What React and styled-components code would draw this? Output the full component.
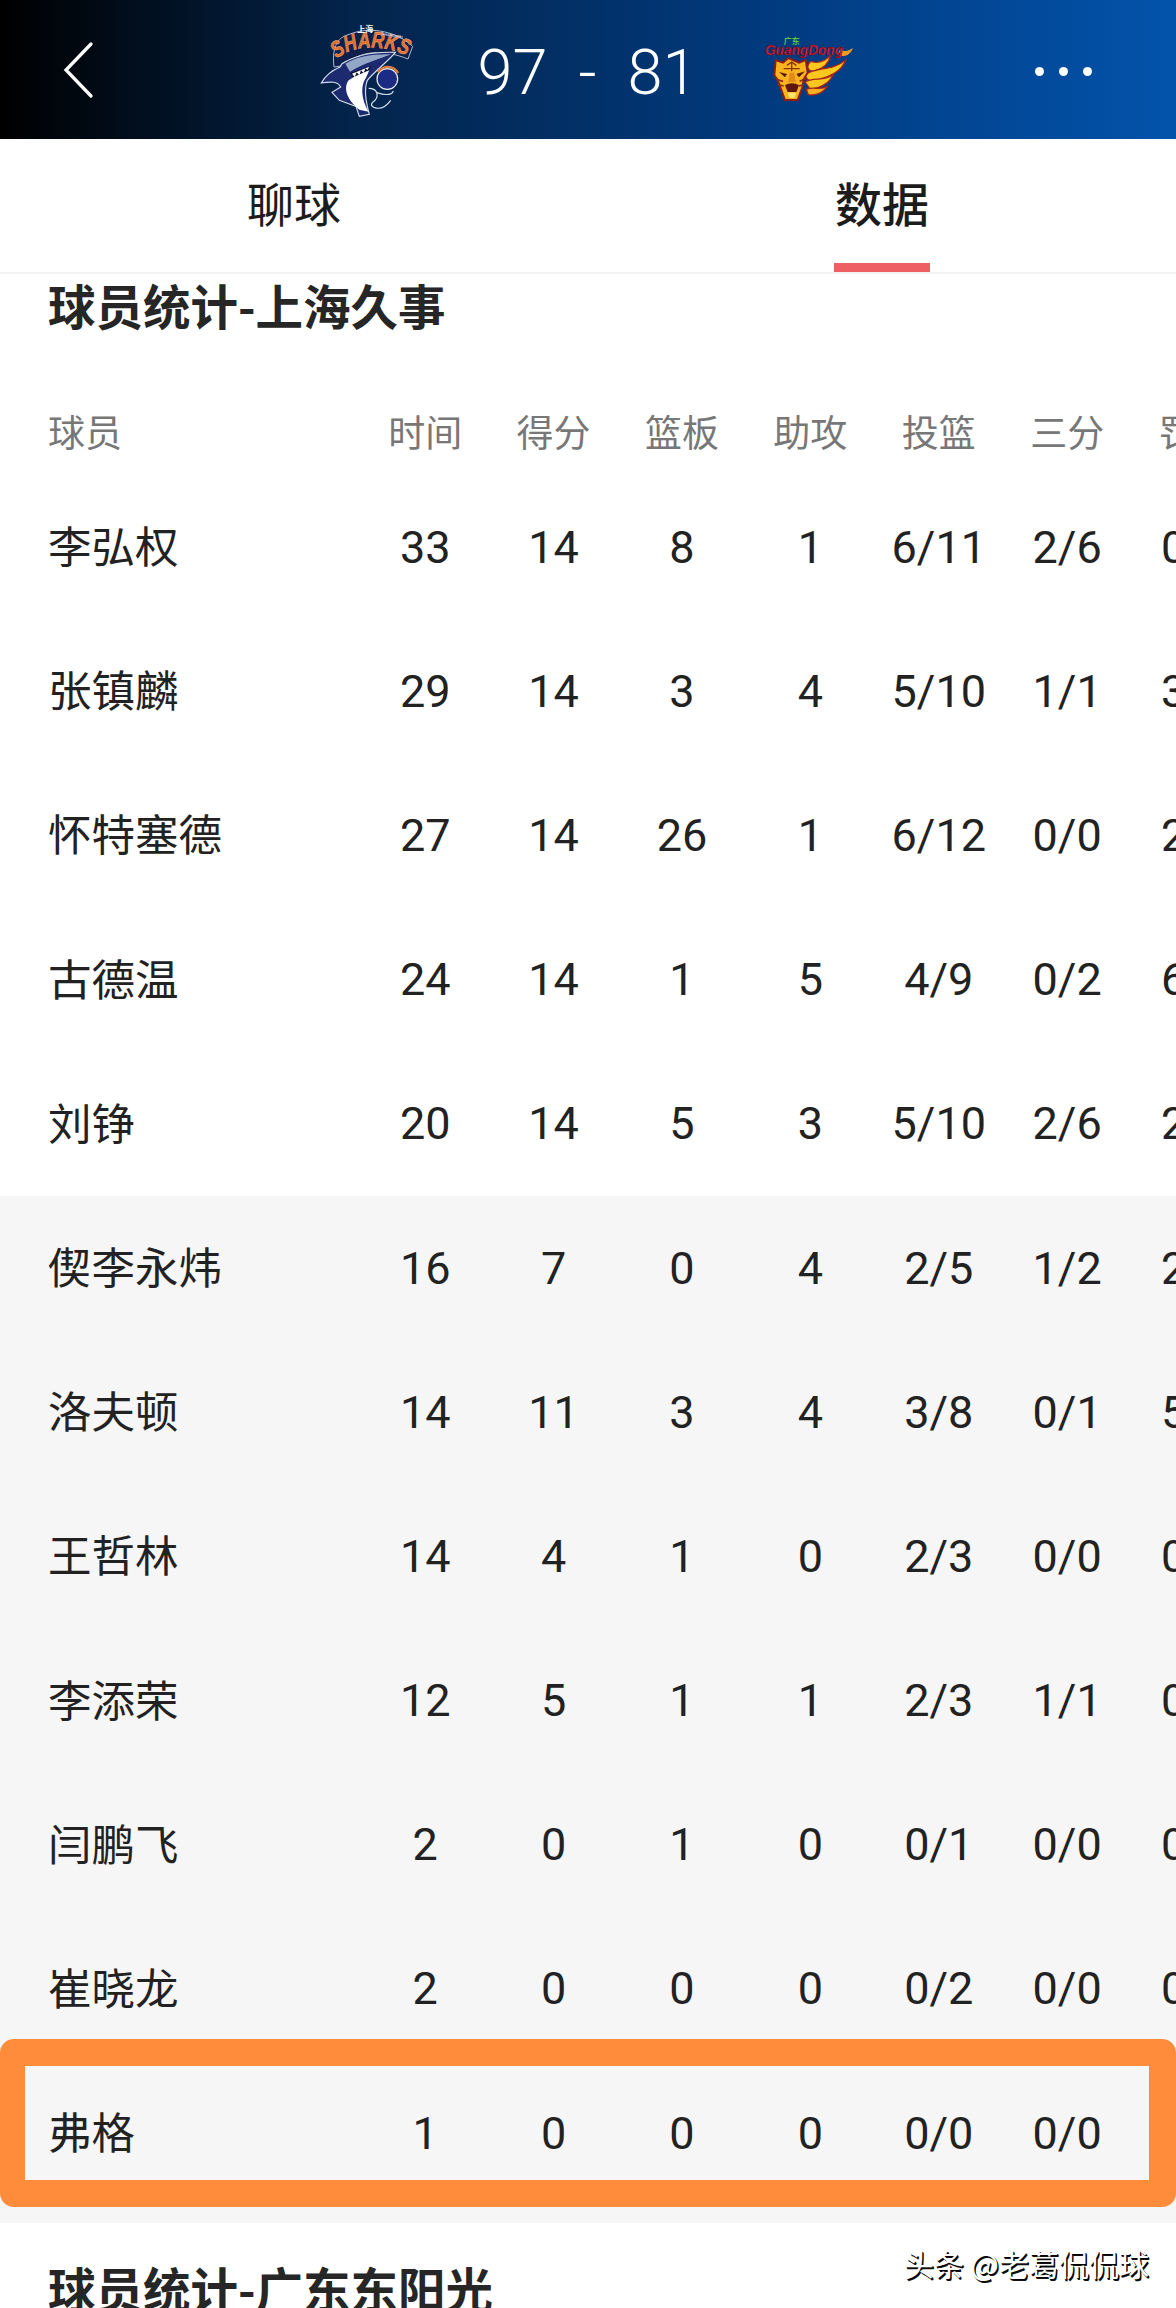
import styled, { createGlobalStyle } from "styled-components";

const GlobalStyle = createGlobalStyle`
  html, body {
    margin: 0;
    padding: 0;
    background: #fff;
  }
  body {
    font-family: Roboto, "Noto Sans CJK SC", sans-serif;
    color: #222;
  }
`;

const Page = styled.div`
  width: 1176px;
  height: 100vh;
  overflow: hidden;
  background: #fff;
`;

const Header = styled.header`
  height: 139px;
  display: grid;
  grid-template-columns: 310px 110px 335px 105px 1fr;
  align-items: center;
  background: linear-gradient(90deg, #000 0%, #03244b 30%, #013a7e 65%, #0353ab 100%);
`;

const BackButton = styled.div`
  padding-left: 60px;
  display: flex;
  align-items: center;
`;

const Score = styled.div`
  display: flex;
  justify-content: center;
  gap: 31px;
  padding-top: 5px;
  font-family: Roboto, sans-serif;
  font-weight: 300;
  font-size: 63px;
  line-height: 1;
  color: #fff;
`;

const MoreDots = styled.div`
  display: flex;
  gap: 15px;
  padding-left: 175px;
  padding-top: 3px;

  span {
    width: 9px;
    height: 9px;
    border-radius: 50%;
    background: #fff;
  }
`;

const Tabs = styled.nav`
  height: 133px;
  display: grid;
  grid-template-columns: 1fr 1fr;
  border-bottom: 2px solid #f3f3f3;
`;

const Tab = styled.div`
  position: relative;
  display: flex;
  align-items: center;
  justify-content: center;
  padding-bottom: 9px;
  font-family: "Noto Sans CJK SC", sans-serif;
  font-size: 47px;
  font-weight: ${(p) => (p.$active ? 500 : 400)};
  color: #1c1c1c;

  &::after {
    content: "";
    display: ${(p) => (p.$active ? "block" : "none")};
    position: absolute;
    bottom: 0;
    left: 50%;
    width: 96px;
    height: 9px;
    margin-left: -48px;
    background: #ee5f63;
  }
`;

const SectionTitle = styled.h2`
  position: relative;
  margin: 0;
  padding: ${(p) => p.$top}px 48px ${(p) => p.$bottom}px;
  font-family: "Noto Sans CJK SC", sans-serif;
  font-size: 47.5px;
  line-height: 62px;
  font-weight: 700;
  color: #262626;
`;

const Row = styled.div`
  position: relative;
  display: grid;
  grid-template-columns: 313px repeat(7, 128.4px);
  align-items: center;
  height: ${(p) => (p.$head ? 82 : 144.2)}px;
  padding-left: 48px;
  font-family: ${(p) => (p.$head ? '"Noto Sans CJK SC"' : "Roboto")}, "Noto Sans CJK SC", sans-serif;
  font-size: ${(p) => (p.$head ? 37 : 45)}px;
  color: ${(p) => (p.$head ? "#777" : "#222")};
`;

const Name = styled.div`
  font-family: "Noto Sans CJK SC", sans-serif;
  font-size: ${(p) => (p.$head ? 37 : 43.5)}px;
  padding-bottom: ${(p) => (p.$head ? 6 : 5)}px;
`;

const Cell = styled.div`
  text-align: center;
  white-space: nowrap;
  padding-bottom: ${(p) => (p.$head ? 6 : 0)}px;
`;

const Bench = styled.div`
  background: #f6f6f7;
  padding-bottom: 18px;
`;

const Highlight = styled.div`
  position: absolute;
  top: -22px;
  left: 0;
  right: 0;
  height: 168px;
  box-sizing: border-box;
  border: 27px solid #ff8c3a;
  border-left-width: 25px;
  border-radius: 14px;
`;

const Watermark = styled.div`
  position: absolute;
  top: 19px;
  right: 27px;
  font-family: "Noto Sans CJK SC", sans-serif;
  font-size: 30px;
  line-height: 42px;
  font-weight: 400;
  color: #fff;
  text-shadow: 1px 1px 0 #000, 1.5px 1.5px 0 #111;
  white-space: nowrap;
`;

const COLUMNS = ["时间", "得分", "篮板", "助攻", "投篮", "三分", "罚球"];

const STARTERS = [
  ["李弘权", "33", "14", "8", "1", "6/11", "2/6", "0/0"],
  ["张镇麟", "29", "14", "3", "4", "5/10", "1/1", "3/3"],
  ["怀特塞德", "27", "14", "26", "1", "6/12", "0/0", "2/2"],
  ["古德温", "24", "14", "1", "5", "4/9", "0/2", "6/6"],
  ["刘铮", "20", "14", "5", "3", "5/10", "2/6", "2/2"],
];

const BENCH = [
  ["偰李永炜", "16", "7", "0", "4", "2/5", "1/2", "2/2"],
  ["洛夫顿", "14", "11", "3", "4", "3/8", "0/1", "5/6"],
  ["王哲林", "14", "4", "1", "0", "2/3", "0/0", "0/0"],
  ["李添荣", "12", "5", "1", "1", "2/3", "1/1", "0/0"],
  ["闫鹏飞", "2", "0", "1", "0", "0/1", "0/0", "0/0"],
  ["崔晓龙", "2", "0", "0", "0", "0/2", "0/0", "0/0"],
  ["弗格", "1", "0", "0", "0", "0/0", "0/0", "0/0"],
];

const BackIcon = () => (
  <svg width="34" height="58" viewBox="0 0 34 58" fill="none">
    <path d="M31 3 L6 29 L31 55" stroke="#fff" strokeWidth="3.3" strokeLinecap="round" />
  </svg>
);

const SharksLogo = () => (
  <svg width="110" height="105" viewBox="0 0 330 315">
    <path d="M72 150 C66 100 76 62 118 52 C170 30 250 36 308 88 L294 126 C220 96 150 100 100 146 Z" fill="#0e1f4c" stroke="#aeb9d0" strokeWidth="3" />
    <path id="sharks-arc" d="M80 126 C126 84 220 78 300 122" fill="none" />
    <text fontFamily="Liberation Sans" fontWeight="700" fontStyle="italic" fontSize="68" fill="#e2702c" stroke="#f2ad80" strokeWidth="1.5">
      <textPath href="#sharks-arc" textLength="222" lengthAdjust="spacingAndGlyphs">SHARKS</textPath>
    </text>
    <text x="142" y="46" fontFamily="Noto Sans CJK SC" fontWeight="700" fontSize="24" fill="#fff">上海</text>
    <text x="214" y="54" fontFamily="Liberation Sans" fontWeight="700" fontSize="12" fill="#c9d2e4" transform="rotate(10 214 54)">SHANGHAI</text>
    <path d="M96 140 C140 112 200 104 256 106 C238 130 192 164 172 190 C162 216 166 250 178 292 L148 298 L138 268 L88 250 L66 226 L92 210 C84 192 60 194 34 198 C46 176 66 160 90 150 Z" fill="#1c2a70" stroke="#d6ddee" strokeWidth="3.5" />
    <path d="M106 140 C140 118 190 110 244 112 C212 124 165 138 120 164 Z" fill="#93a6c6" />
    <path d="M120 168 L184 146 L178 162 L132 184 Z" fill="#0c1436" />
    <path d="M126 170 L134 180 L140 166 L148 175 L153 160 L161 168 L166 154 L172 159 L178 149 Z" fill="#fff" />
    <path d="M116 190 C136 176 160 168 178 160 L168 182 C154 202 150 238 176 284 L148 278 C112 250 98 214 116 190 Z" fill="#fff" />
    <circle cx="232" cy="186" r="31" fill="#1c2c84" stroke="#eef1f8" strokeWidth="3.5" />
    <path d="M204 166 C220 144 250 144 264 168" fill="none" stroke="#e37c3c" strokeWidth="7" />
    <path d="M176 214 C204 214 210 240 188 256 C172 270 214 290 242 250" fill="none" stroke="#d8dfee" strokeWidth="3.5" />
    <path d="M198 226 C222 234 244 238 250 222" fill="none" stroke="#d8dfee" strokeWidth="3.5" />
  </svg>
);

const GuangdongLogo = () => (
  <svg width="105" height="75" viewBox="0 0 315 225">
    <text x="86" y="36" fontFamily="Noto Sans CJK SC" fontWeight="700" fontSize="24" fill="#5cc443">广东</text>
    <path d="M256 50 C268 62 282 56 294 48 C286 70 266 78 248 68 Z" fill="#f29a1e" />
    <path d="M168 88 C186 94 208 90 226 70 C222 96 202 110 180 116 C160 122 150 104 168 88 Z" fill="#fcc81e" stroke="#a9261b" strokeWidth="4" />
    <path d="M150 128 C184 104 232 118 272 84 C260 118 222 136 192 142 C172 150 156 150 150 128 Z" fill="#fcc81e" stroke="#a9261b" strokeWidth="4" />
    <path d="M150 150 C176 134 204 150 234 128 C222 158 188 168 166 172 Z" fill="#fcc81e" stroke="#a9261b" strokeWidth="4" />
    <path d="M154 172 C178 162 192 176 216 164 C204 184 178 192 160 188 Z" fill="#f7b01b" stroke="#a9261b" strokeWidth="4" />
    <path d="M62 84 L84 92 L100 78 L132 92 L152 84 L158 122 L146 142 L142 166 L128 204 L90 204 L76 166 L68 144 L58 130 Z" fill="#f7b41c" stroke="#8f1f14" strokeWidth="6" />
    <path d="M72 120 L96 126 L90 136 Z M150 118 L124 126 L132 136 Z" fill="#5a1a10" />
    <path d="M64 142 L84 148 M68 158 L86 162 M152 140 L134 148 M146 158 L132 162" stroke="#8f2a14" strokeWidth="5" fill="none" />
    <path d="M104 122 L118 122 L122 150 L100 150 Z" fill="#e08a1c" />
    <path d="M90 160 C102 152 120 152 132 160 L124 180 L98 180 Z" fill="#5e160e" />
    <path d="M98 182 L124 182 L118 198 L104 198 Z" fill="#ffe56e" />
    <path d="M96 100 L110 90 L124 100 M86 110 L134 110 M110 90 L110 118" fill="none" stroke="#8a3314" strokeWidth="4" />
    <text x="30" y="68" fontFamily="Liberation Sans" fontWeight="700" fontStyle="italic" fontSize="42" fill="#d8203f" stroke="#4d0c18" strokeWidth="1.5" textLength="234" lengthAdjust="spacingAndGlyphs">GuangDong</text>
  </svg>
);

const PlayerRow = ({ player, highlight }) => {
  const [name, ...stats] = player;
  return (
    <Row>
      <Name>{name}</Name>
      {stats.map((value, i) => (
        <Cell key={i}>{value}</Cell>
      ))}
      {highlight && <Highlight />}
    </Row>
  );
};

export default function App() {
  return (
    <Page>
      <GlobalStyle />
      <Header>
        <BackButton>
          <BackIcon />
        </BackButton>
        <SharksLogo />
        <Score>
          <span>97</span>
          <span>-</span>
          <span>81</span>
        </Score>
        <GuangdongLogo />
        <MoreDots>
          <span />
          <span />
          <span />
        </MoreDots>
      </Header>

      <Tabs>
        <Tab>聊球</Tab>
        <Tab $active>数据</Tab>
      </Tabs>

      <SectionTitle $top={0} $bottom={57}>球员统计-上海久事</SectionTitle>

      <Row $head>
        <Name $head>球员</Name>
        {COLUMNS.map((c) => (
          <Cell $head key={c}>{c}</Cell>
        ))}
      </Row>

      {STARTERS.map((p) => (
        <PlayerRow key={p[0]} player={p} />
      ))}

      <Bench>
        {BENCH.map((p) => (
          <PlayerRow key={p[0]} player={p} highlight={p[0] === "弗格"} />
        ))}
      </Bench>

      <SectionTitle $top={34} $bottom={0}>
        球员统计-广东东阳光
        <Watermark>头条 @老葛侃侃球</Watermark>
      </SectionTitle>
    </Page>
  );
}
